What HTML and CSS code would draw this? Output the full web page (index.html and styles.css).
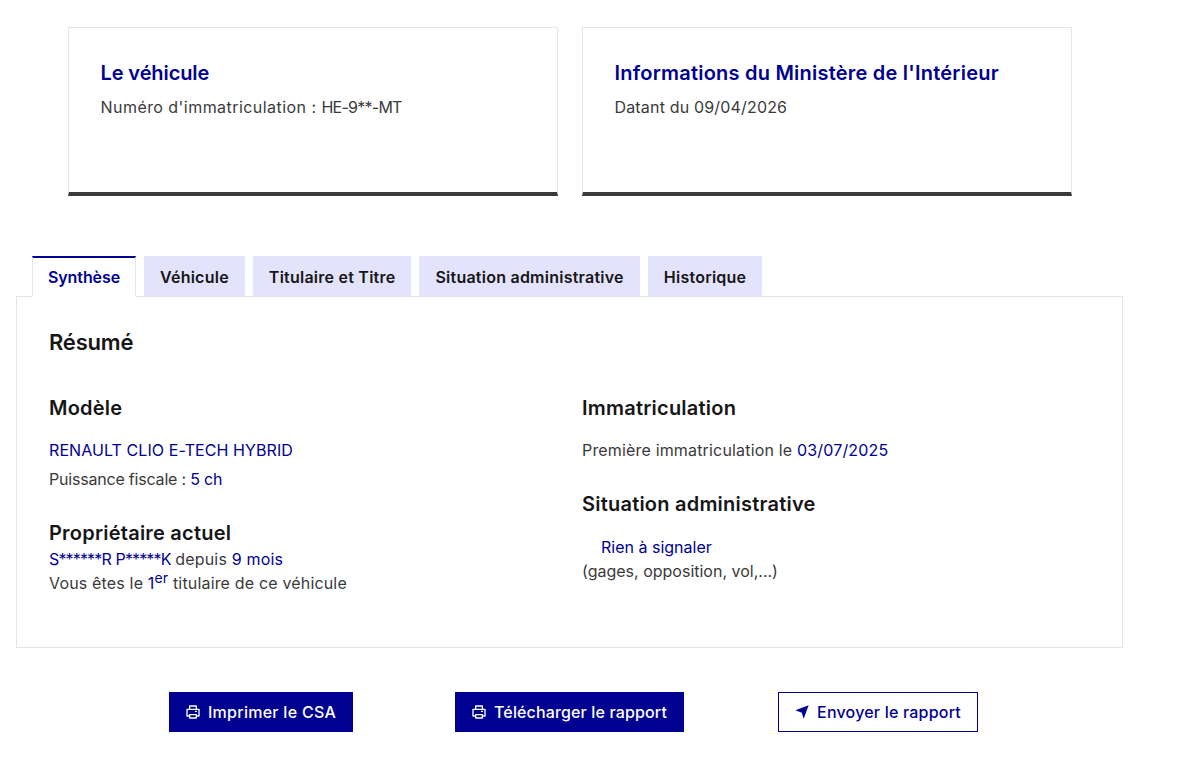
FILE: index.html
```html
<!DOCTYPE html>
<html lang="fr">
<head>
<meta charset="utf-8">
<title>Rapport du véhicule</title>
<link rel="stylesheet" href="styles.css">
</head>
<body>
<main class="page">
  <section class="cards">
    <article class="card">
      <h2 class="card-title card-title-short">Le véhicule</h2>
      <p class="card-text card-text-id">Numéro d'immatriculation : <span class="plate">HE-9**-MT</span></p>
    </article>
    <article class="card">
      <h2 class="card-title">Informations du Ministère de l'Intérieur</h2>
      <p class="card-text">Datant du 09/04/2026</p>
    </article>
  </section>

  <nav class="tabs">
    <span class="tab tab-active">Synthèse</span>
    <span class="tab">Véhicule</span>
    <span class="tab">Titulaire et Titre</span>
    <span class="tab">Situation administrative</span>
    <span class="tab">Historique</span>
  </nav>

  <section class="panel">
    <h3 class="panel-title">Résumé</h3>
    <div class="columns">
      <div class="column">
        <h4 class="heading">Modèle</h4>
        <p class="line line-model"><span class="accent tight">RENAULT CLIO E-TECH HYBRID</span></p>
        <p class="line line-power">Puissance fiscale : <span class="accent">5 ch</span></p>
        <h4 class="heading heading-owner">Propriétaire actuel</h4>
        <p class="line"><span class="accent masked">S******R P*****K</span> depuis <span class="accent">9 mois</span></p>
        <p class="line">Vous êtes le <span class="accent">1<sup class="ordinal">er</sup></span> titulaire de ce véhicule</p>
      </div>
      <div class="column">
        <h4 class="heading">Immatriculation</h4>
        <p class="line line-model">Première immatriculation le <span class="accent">03/07/2025</span></p>
        <h4 class="heading heading-admin">Situation administrative</h4>
        <p class="line line-clear"><span class="accent">Rien à signaler</span></p>
        <p class="line line-note">(gages, opposition, vol,...)</p>
      </div>
    </div>
  </section>

  <section class="actions">
    <button class="btn btn-primary" type="button">
      <svg class="icon" viewBox="0 0 24 24" aria-hidden="true"><path fill="currentColor" d="M17 2a1 1 0 0 1 1 1v4h3a1 1 0 0 1 1 1v10a1 1 0 0 1-1 1h-3v2a1 1 0 0 1-1 1H7a1 1 0 0 1-1-1v-2H3a1 1 0 0 1-1-1V8a1 1 0 0 1 1-1h3V3a1 1 0 0 1 1-1h10Zm-1 15H8v3h8v-3Zm4-8H4v8h2v-1a1 1 0 0 1 1-1h10a1 1 0 0 1 1 1v1h2V9Zm-4-5H8v3h8V4Zm-1 6h3v2h-3v-2Z"/></svg>
      Imprimer le CSA
    </button>
    <button class="btn btn-primary btn-download" type="button">
      <svg class="icon" viewBox="0 0 24 24" aria-hidden="true"><path fill="currentColor" d="M17 2a1 1 0 0 1 1 1v4h3a1 1 0 0 1 1 1v10a1 1 0 0 1-1 1h-3v2a1 1 0 0 1-1 1H7a1 1 0 0 1-1-1v-2H3a1 1 0 0 1-1-1V8a1 1 0 0 1 1-1h3V3a1 1 0 0 1 1-1h10Zm-1 15H8v3h8v-3Zm4-8H4v8h2v-1a1 1 0 0 1 1-1h10a1 1 0 0 1 1 1v1h2V9Zm-4-5H8v3h8V4Zm-1 6h3v2h-3v-2Z"/></svg>
      Télécharger le rapport
    </button>
    <button class="btn btn-secondary" type="button">
      <svg class="icon" viewBox="0 0 24 24" aria-hidden="true"><path fill="currentColor" d="M2 9.5 22 2l-7.5 20-2.8-9L2 9.5Z"/></svg>
      Envoyer le rapport
    </button>
  </section>
</main>
</body>
</html>
```

FILE: styles.css
```css
* { box-sizing: border-box; }

html, body { margin: 0; padding: 0; background: #fff; }

body {
  font-family: Inter, "Liberation Sans", sans-serif;
  font-size: 16px;
  line-height: 24px;
  letter-spacing: 0.17px;
  color: #3a3a3a;
}

h2, h3, h4, p { margin: 0; }

.page {
  width: 1107px;
  margin-left: 16px;
  padding-top: 27px;
}

.cards {
  display: flex;
  justify-content: center;
  gap: 24px;
}

.card {
  width: 490px;
  height: 169px;
  padding: 31px 32px 32px;
  border: 1px solid #e5e5e5;
  border-bottom: 4px solid #3a3a3a;
}

.card-title {
  font-size: 20px;
  line-height: 28px;
  font-weight: 600;
  letter-spacing: 0.22px;
  color: #000091;
}

.card-title-short { letter-spacing: -0.1px; }

.card-text { margin-top: 8px; }
.card-text-id { letter-spacing: 0.45px; }
.plate { letter-spacing: -0.75px; }

.tabs {
  display: flex;
  gap: 8px;
  height: 40px;
  margin-top: 60px;
  margin-left: 16px;
}

.tab {
  padding: 9px 16px 7px;
  font-weight: 600;
  letter-spacing: 0.24px;
  color: #161616;
  background: #e3e3fd;
  box-shadow: 0 1px 0 #e5e5e5;
  position: relative;
}

.tab-active {
  color: #000091;
  background: #fff;
  border-top: 2px solid #000091;
  border-left: 1px solid #e5e5e5;
  border-right: 1px solid #e5e5e5;
  padding: 7px 15px 7px;
  letter-spacing: -0.1px;
  box-shadow: 0 1px 0 #fff;
  z-index: 1;
}

.panel {
  height: 352px;
  padding: 32px;
  border: 1px solid #e5e5e5;
}

.panel-title {
  font-size: 22px;
  line-height: 28px;
  font-weight: 600;
  letter-spacing: -0.2px;
  color: #161616;
  margin-top: -1px;
}

.columns {
  display: grid;
  grid-template-columns: 533px 1fr;
  margin-top: 38px;
}

.heading {
  font-size: 20px;
  line-height: 28px;
  font-weight: 600;
  letter-spacing: 0.22px;
  color: #161616;
}

.line-model { margin-top: 16px; }
.line-power { margin-top: 5px; letter-spacing: -0.2px; }
.heading-owner { margin-top: 28px; }
.heading-admin { margin-top: 28px; }
.line-clear { margin-top: 17px; padding-left: 19px; letter-spacing: 0; }
.line-note { letter-spacing: 0; }

.accent { color: #000091; }
.tight { letter-spacing: 0.08px; }
.masked { letter-spacing: -0.85px; word-spacing: 1px; }

.ordinal {
  font-size: 14px;
  line-height: 0;
}

.actions {
  display: grid;
  grid-template-columns: repeat(3, 308.5px);
  justify-content: center;
  justify-items: center;
  margin-top: 44px;
}

.btn {
  display: flex;
  align-items: center;
  gap: 7px;
  height: 40px;
  padding: 0 16px 0 15px;
  font: inherit;
  font-weight: 450;
  letter-spacing: 0.28px;
  border: 1px solid #000091;
}

.btn-download { letter-spacing: 0.14px; }
.btn-primary { color: #fff; background: #000091; }
.btn-secondary { color: #000091; background: #fff; letter-spacing: 0.2px; }

.icon { width: 16px; height: 16px; flex: none; }
```
